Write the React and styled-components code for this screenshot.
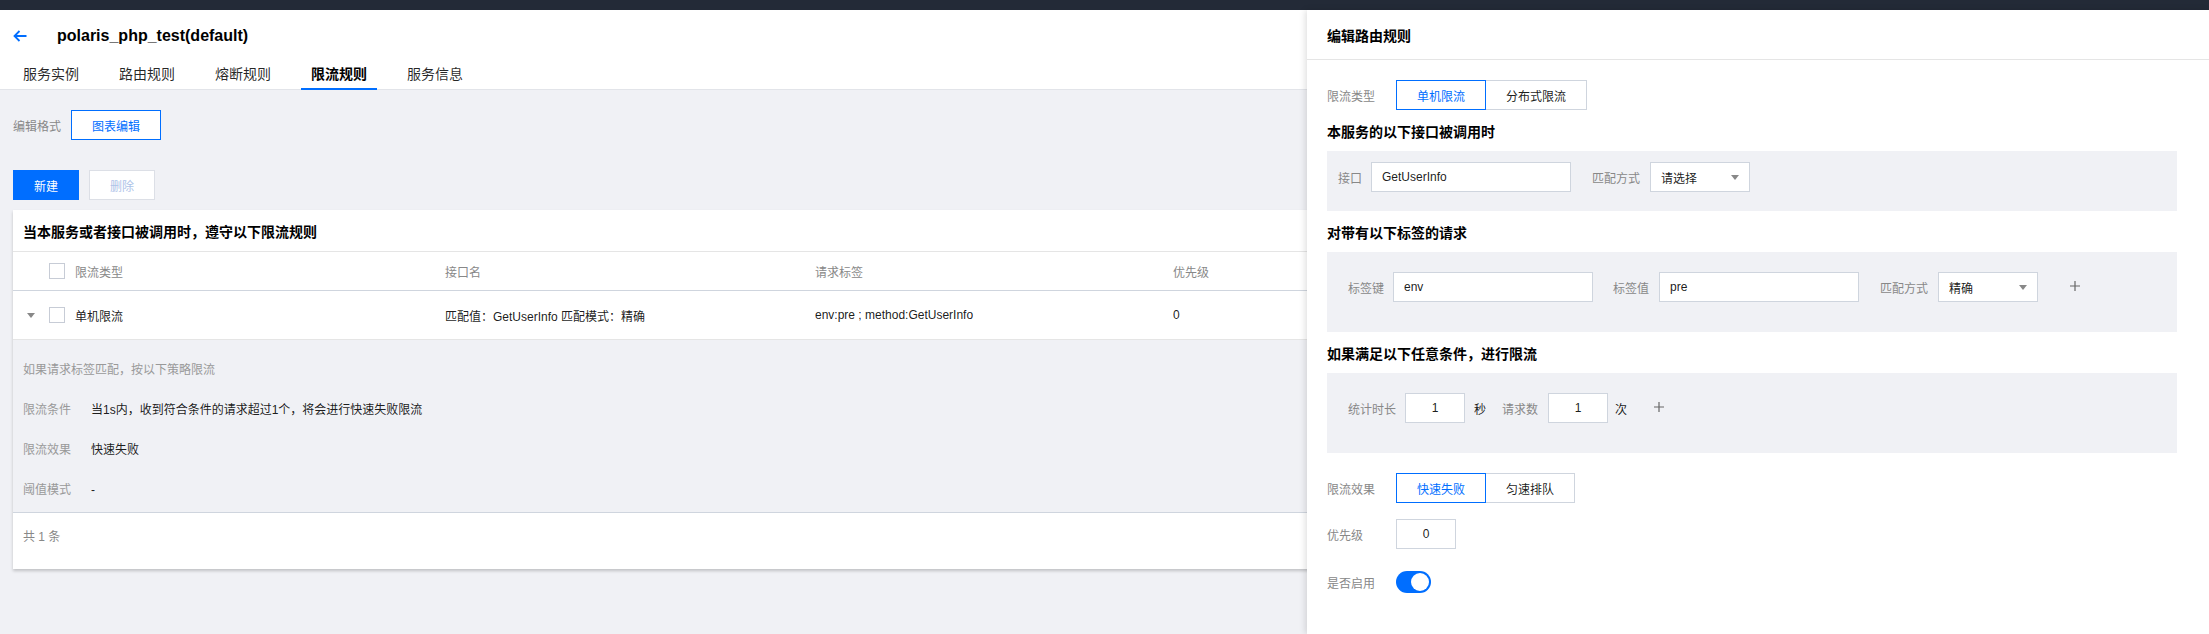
import React from 'react';
import styled, { createGlobalStyle } from 'styled-components';

const Global = createGlobalStyle`
  html, body { margin: 0; padding: 0; }
  body {
    font-family: "Liberation Sans", "Noto Sans CJK SC", sans-serif;
    font-size: 12px;
    color: rgba(0, 0, 0, 0.9);
    background: #f0f1f5;
  }
  * { box-sizing: border-box; }
`;

const BLUE = '#006eff';
const GRAY = '#888888';
const BORDER = '#cfd5de';

const Page = styled.div`
  position: relative;
  min-height: 100vh;
  display: flex;
  flex-direction: column;
  background: #f0f1f5;
  overflow: hidden;
`;

const TopBar = styled.div`
  height: 10px;
  flex-shrink: 0;
  background: #232a37;
`;

const Header = styled.header`
  height: 80px;
  background: #fff;
  border-bottom: 1px solid #e2e4e9;
  display: flex;
  flex-direction: column;
`;

const TitleRow = styled.div`
  height: 51px;
  display: flex;
  align-items: center;
  padding-left: 13px;
`;

const BackIcon = styled.svg`
  width: 14px;
  height: 12px;
  margin-right: 30px;
  flex-shrink: 0;
`;

const PageTitle = styled.h1`
  margin: 0;
  font-size: 16px;
  font-weight: 700;
  color: #000;
  font-family: "Liberation Sans", "Noto Sans CJK SC", sans-serif;
`;

const Tabs = styled.nav`
  display: flex;
  padding-left: 13px;
  height: 29px;
  margin-bottom: -1px;
`;

const Tab = styled.div`
  padding: 0 10px;
  margin-right: 20px;
  font-size: 14px;
  line-height: 27px;
  color: ${p => (p.$active ? '#000' : 'rgba(0,0,0,0.85)')};
  font-weight: ${p => (p.$active ? 700 : 400)};
  border-bottom: 2px solid ${p => (p.$active ? BLUE : 'transparent')};
`;

const Main = styled.main`
  padding: 20px 13px 20px 13px;
  display: flex;
  flex-direction: column;
`;

const FormatRow = styled.div`
  display: flex;
  align-items: center;
`;

const MutedLabel = styled.span`
  color: ${GRAY};
  font-size: 12px;
  margin-right: 10px;
`;

const Button = styled.button`
  height: 30px;
  width: ${p => p.$w || 66}px;
  padding: 0;
  font-family: inherit;
  font-size: 12px;
  border: 1px solid ${p => (p.$variant === 'primary' ? BLUE : p.$variant === 'outline' ? BLUE : '#dcdfe6')};
  background: ${p => (p.$variant === 'primary' ? BLUE : '#fff')};
  color: ${p => (p.$variant === 'primary' ? '#fff' : p.$variant === 'outline' ? BLUE : '#aec3e8')};
  cursor: pointer;
`;

const ActionRow = styled.div`
  display: flex;
  gap: 10px;
  margin-top: 30px;
`;

const Card = styled.section`
  margin-top: 10px;
  background: #fff;
  box-shadow: 0 2px 3px rgba(0, 0, 0, 0.2);
`;

const CardTitle = styled.div`
  height: 42px;
  padding-left: 10px;
  display: flex;
  align-items: center;
  font-size: 14px;
  font-weight: 700;
  color: #000;
  border-bottom: 1px solid #e5e5e5;
`;

const TableRow = styled.div`
  display: grid;
  grid-template-columns: 36px 26px 370px 370px 358px 1fr;
  align-items: center;
  height: ${p => p.$h}px;
  border-bottom: 1px solid ${p => p.$line};
  color: ${p => (p.$head ? GRAY : 'rgba(0,0,0,0.9)')};
`;

const Cell = styled.div`
  display: flex;
  align-items: center;
  justify-content: ${p => (p.$center ? 'center' : 'flex-start')};
`;

const Checkbox = styled.span`
  display: inline-block;
  width: 16px;
  height: 16px;
  border: 1px solid #c7ccd6;
  background: #fff;
`;

const Caret = styled.span`
  display: inline-block;
  width: 0;
  height: 0;
  border-left: 4px solid transparent;
  border-right: 4px solid transparent;
  border-top: 5px solid ${p => p.$color || GRAY};
`;

const Detail = styled.div`
  background: #f0f1f5;
  padding: 20px 10px 12px;
  display: flex;
  flex-direction: column;
  gap: 20px;
  border-bottom: 1px solid ${BORDER};
`;

const DetailLine = styled.div`
  display: flex;
  line-height: 20px;
  color: ${p => (p.$muted ? '#999' : 'rgba(0,0,0,0.9)')};
`;

const DetailKey = styled.span`
  width: 68px;
  color: #999;
  flex-shrink: 0;
`;

const Footer = styled.div`
  padding: 14px 10px 22px;
  line-height: 20px;
  color: ${GRAY};
`;

/* Drawer */
const Drawer = styled.aside`
  position: absolute;
  top: 10px;
  left: 1307px;
  right: 0;
  bottom: 0;
  background: #fff;
  box-shadow: -2px 0 6px rgba(0, 0, 0, 0.12);
  display: flex;
  flex-direction: column;
`;

const DrawerHeader = styled.div`
  height: 50px;
  padding: 0 20px;
  display: flex;
  align-items: center;
  font-size: 14px;
  font-weight: 700;
  color: #000;
  border-bottom: 1px solid #e5e5e5;
`;

const DrawerBody = styled.div`
  padding: 20px 32px 20px 20px;
  display: flex;
  flex-direction: column;
`;

const FormRow = styled.div`
  display: flex;
  align-items: center;
  margin-top: ${p => p.$mt || 0}px;
`;

const FormLabel = styled.span`
  width: 69px;
  flex-shrink: 0;
  color: ${GRAY};
`;

const Segmented = styled.div`
  display: flex;
`;

const SegButton = styled.div`
  position: relative;
  z-index: ${p => (p.$active ? 1 : 0)};
  height: 30px;
  padding: 0 20px;
  margin-left: ${p => (p.$first ? 0 : -1)}px;
  display: flex;
  align-items: center;
  border: 1px solid ${p => (p.$active ? BLUE : BORDER)};
  color: ${p => (p.$active ? BLUE : 'rgba(0,0,0,0.9)')};
  background: #fff;
`;

const SectionTitle = styled.div`
  padding: 12px 0 9px;
  line-height: 20px;
  font-size: 14px;
  font-weight: 700;
  color: #000;
`;

const GrayBox = styled.div`
  background: #f0f1f5;
  padding: ${p => p.$pad};
  display: flex;
  align-items: center;
`;

const FieldLabel = styled.span`
  color: ${GRAY};
  margin-right: ${p => (p.$mr != null ? p.$mr : 10)}px;
  margin-left: ${p => p.$ml || 0}px;
  white-space: nowrap;
`;

const Input = styled.div`
  width: ${p => p.$w}px;
  height: 30px;
  border: 1px solid ${BORDER};
  background: #fff;
  padding: 0 10px;
  display: flex;
  align-items: center;
  justify-content: ${p => (p.$center ? 'center' : 'space-between')};
  color: rgba(0, 0, 0, 0.9);
  flex-shrink: 0;
`;

const Unit = styled.span`
  margin-left: ${p => p.$ml}px;
  color: rgba(0, 0, 0, 0.9);
`;

const PlusIcon = styled.svg`
  width: 10px;
  height: 10px;
  margin-left: ${p => p.$ml}px;
  margin-top: -2px;
  flex-shrink: 0;
`;

const Toggle = styled.div`
  width: 35px;
  height: 22px;
  border-radius: 11px;
  background: ${BLUE};
  padding: 2px;
  display: flex;
  justify-content: flex-end;
`;

const Knob = styled.span`
  width: 18px;
  height: 18px;
  border-radius: 50%;
  background: #fff;
`;

const Plus = ({ ml }) => (
  <PlusIcon $ml={ml} viewBox="0 0 10 10">
    <path d="M5 0v10M0 5h10" stroke="#666" strokeWidth="1.2" fill="none" />
  </PlusIcon>
);

export default function App() {
  const tabs = ['服务实例', '路由规则', '熔断规则', '限流规则', '服务信息'];
  return (
    <Page>
      <Global />
      <TopBar />
      <Header>
        <TitleRow>
          <BackIcon viewBox="0 0 14 12">
            <path d="M13.5 6H1.5M6.5 1L1.5 6l5 5" stroke={BLUE} strokeWidth="1.8" fill="none" />
          </BackIcon>
          <PageTitle>polaris_php_test(default)</PageTitle>
        </TitleRow>
        <Tabs>
          {tabs.map(t => (
            <Tab key={t} $active={t === '限流规则'}>{t}</Tab>
          ))}
        </Tabs>
      </Header>

      <Main>
        <FormatRow>
          <MutedLabel>编辑格式</MutedLabel>
          <Button $variant="outline" $w={90}>图表编辑</Button>
        </FormatRow>
        <ActionRow>
          <Button $variant="primary">新建</Button>
          <Button $variant="disabled">删除</Button>
        </ActionRow>

        <Card>
          <CardTitle>当本服务或者接口被调用时，遵守以下限流规则</CardTitle>
          <TableRow $h={39} $line={BORDER} $head>
            <Cell />
            <Cell><Checkbox /></Cell>
            <Cell>限流类型</Cell>
            <Cell>接口名</Cell>
            <Cell>请求标签</Cell>
            <Cell>优先级</Cell>
          </TableRow>
          <TableRow $h={49} $line="#e5e5e5">
            <Cell $center><Caret /></Cell>
            <Cell><Checkbox /></Cell>
            <Cell>单机限流</Cell>
            <Cell>匹配值：GetUserInfo 匹配模式：精确</Cell>
            <Cell>env:pre ; method:GetUserInfo</Cell>
            <Cell>0</Cell>
          </TableRow>
          <Detail>
            <DetailLine $muted>如果请求标签匹配，按以下策略限流</DetailLine>
            <DetailLine><DetailKey>限流条件</DetailKey>当1s内，收到符合条件的请求超过1个，将会进行快速失败限流</DetailLine>
            <DetailLine><DetailKey>限流效果</DetailKey>快速失败</DetailLine>
            <DetailLine><DetailKey>阈值模式</DetailKey>-</DetailLine>
          </Detail>
          <Footer>共 1 条</Footer>
        </Card>
      </Main>

      <Drawer>
        <DrawerHeader>编辑路由规则</DrawerHeader>
        <DrawerBody>
          <FormRow>
            <FormLabel>限流类型</FormLabel>
            <Segmented>
              <SegButton $first $active>单机限流</SegButton>
              <SegButton>分布式限流</SegButton>
            </Segmented>
          </FormRow>

          <SectionTitle>本服务的以下接口被调用时</SectionTitle>
          <GrayBox $pad="11px 11px 19px">
            <FieldLabel $mr={9}>接口</FieldLabel>
            <Input $w={200}>GetUserInfo</Input>
            <FieldLabel $ml={21}>匹配方式</FieldLabel>
            <Input $w={100}>请选择<Caret /></Input>
          </GrayBox>

          <SectionTitle>对带有以下标签的请求</SectionTitle>
          <GrayBox $pad="20px 21px 30px">
            <FieldLabel $mr={9}>标签键</FieldLabel>
            <Input $w={200}>env</Input>
            <FieldLabel $ml={20}>标签值</FieldLabel>
            <Input $w={200}>pre</Input>
            <FieldLabel $ml={21}>匹配方式</FieldLabel>
            <Input $w={100}>精确<Caret /></Input>
            <Plus ml={32} />
          </GrayBox>

          <SectionTitle>如果满足以下任意条件，进行限流</SectionTitle>
          <GrayBox $pad="20px 21px 30px">
            <FieldLabel $mr={9}>统计时长</FieldLabel>
            <Input $w={60} $center>1</Input>
            <Unit $ml={9}>秒</Unit>
            <FieldLabel $ml={16}>请求数</FieldLabel>
            <Input $w={60} $center>1</Input>
            <Unit $ml={7}>次</Unit>
            <Plus ml={27} />
          </GrayBox>

          <FormRow $mt={20}>
            <FormLabel>限流效果</FormLabel>
            <Segmented>
              <SegButton $first $active>快速失败</SegButton>
              <SegButton>匀速排队</SegButton>
            </Segmented>
          </FormRow>
          <FormRow $mt={16}>
            <FormLabel>优先级</FormLabel>
            <Input $w={60} $center>0</Input>
          </FormRow>
          <FormRow $mt={22}>
            <FormLabel>是否启用</FormLabel>
            <Toggle><Knob /></Toggle>
          </FormRow>
        </DrawerBody>
      </Drawer>
    </Page>
  );
}
